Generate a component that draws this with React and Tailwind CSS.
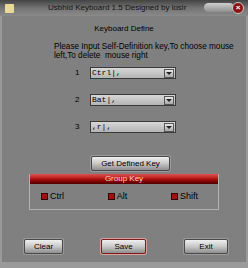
import { useState } from "react";

const font = { fontFamily: '"Liberation Sans", Arial, sans-serif' };

function Combo({ value }) {
  return (
    <div className="flex h-[12px] w-[86px] items-center border border-[#3a3a3a] bg-gradient-to-b from-[#d8d8d8] to-[#b4b4b4]">
      <span className="flex-1 pl-[1px] text-[8px] leading-none text-black" style={{ fontFamily: '"Liberation Mono", monospace' }}>
        {value}
      </span>
      <div className="mr-[1px] flex h-[9px] w-[10px] items-center justify-center border border-[#555] bg-gradient-to-b from-[#e8e8e8] to-[#a8a8a8]">
        <div className="h-0 w-0 border-x-[3px] border-t-[3px] border-x-transparent border-t-[#222]" />
      </div>
    </div>
  );
}

function GrayButton({ children, w, red }) {
  return (
    <button
      className={`flex h-[15px] items-center justify-center rounded-[2px] border ${red ? "border-[#7a1c1c] shadow-[0_0_0_1px_#d9a0a0]" : "border-[#4a4a4a] shadow-[0_0_0_1px_#9a9a9a]"} bg-gradient-to-b from-[#f0f0f0] via-[#c8c8c8] to-[#8e8e8e] text-[8px] leading-none text-black`}
      style={{ width: w }}
    >
      {children}
    </button>
  );
}

function Check({ label }) {
  const [on, setOn] = useState(true);
  return (
    <div className="flex items-center gap-[2px]" onClick={() => setOn(!on)}>
      <div className={`h-[7px] w-[7px] border border-[#3a0000] ${on ? "bg-[#a01010]" : "bg-[#ddd]"}`} />
      <span className="text-[9px] leading-none text-black">{label}</span>
    </div>
  );
}

export default function App() {
  return (
    <div className="flex h-[268px] w-[248px] flex-col bg-[#808080]" style={font}>
      <div className="relative flex h-[16px] items-center bg-gradient-to-b from-[#444] via-[#747474] to-[#8a8a8a]">
        <div className="ml-[5px] h-[9px] w-[9px] rounded-[1px] bg-[#e8d89a]" />
        <span className="ml-[34px] text-[8px] leading-none text-[#111]">Usbhid Keyboard 1.5 Designed by losir</span>
        <div className="absolute right-[14px] top-[3px] h-[9px] w-[30px] rounded-full bg-gradient-to-b from-[#cfcfcf] to-[#8f8f8f]" />
        <div className="absolute right-[4px] top-[2px] flex h-[12px] w-[12px] items-center justify-center rounded-full border border-[#c7c7c7] bg-[#8a1414] text-[8px] font-bold leading-none text-white">
          ×
        </div>
      </div>
      <div className="flex flex-1 flex-col border-x-[2px] border-b-[6px] border-[#9a9a9a]">
        <div className="mt-[9px] text-center text-[8px] leading-none text-black">Keyboard Define</div>
        <div className="ml-[52px] mt-[9px] text-[8.2px] leading-[9px] text-black">
          Please Input Self-Definition key,To choose mouse
          <br />
          left,To delete&nbsp; mouse right
        </div>
        <div className="mt-[7px] flex flex-col gap-[15px] pl-[73px]">
          {["Ctrl|,", "Bat|,", ",r|,"].map((v, i) => (
            <div key={i} className="flex items-center">
              <span className="w-[15px] text-[8px] leading-none text-black">{i + 1}</span>
              <Combo value={v} />
            </div>
          ))}
        </div>
        <div className="mt-[23px] flex justify-center">
          <div className="ml-[13px]">
            <GrayButton w={79}>Get Defined Key</GrayButton>
          </div>
        </div>
        <div className="mx-[27px] mt-[3px] flex flex-col border border-[#b0b0b0] border-t-0">
          <div className="h-[10px] bg-gradient-to-b from-[#e05050] via-[#b01010] to-[#500000] text-center text-[8px] leading-[10px] text-[#ffd0d0]">
            Group Key
          </div>
          <div className="flex h-[25px] items-center justify-between pl-[11px] pr-[20px]">
            <Check label="Ctrl" />
            <Check label="Alt" />
            <Check label="Shift" />
          </div>
        </div>
        <div className="mt-[29px] flex justify-between pl-[22px] pr-[18px]">
          <GrayButton w={39}>Clear</GrayButton>
          <GrayButton w={45} red>
            Save
          </GrayButton>
          <GrayButton w={44}>Exit</GrayButton>
        </div>
      </div>
    </div>
  );
}
